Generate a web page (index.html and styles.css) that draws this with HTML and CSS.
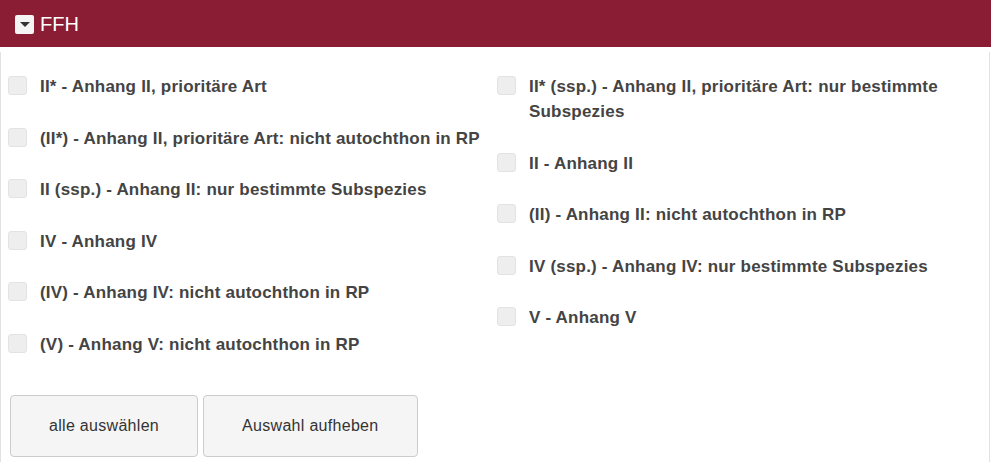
FILE: index.html
```html
<!DOCTYPE html>
<html lang="de">
<head>
<meta charset="utf-8">
<link rel="stylesheet" href="styles.css">
</head>
<body>
<div class="panel">
  <div class="panel-head">
    <span class="toggle"><span class="tri"></span></span>
    <span class="title">FFH</span>
  </div>
  <div class="panel-body">
    <div class="cols">
      <div class="col">
        <label class="item"><span class="cb"></span><span class="txt">II* - Anhang II, prioritäre Art</span></label>
        <label class="item"><span class="cb"></span><span class="txt">(II*) - Anhang II, prioritäre Art: nicht autochthon in RP</span></label>
        <label class="item"><span class="cb"></span><span class="txt">II (ssp.) - Anhang II: nur bestimmte Subspezies</span></label>
        <label class="item"><span class="cb"></span><span class="txt">IV - Anhang IV</span></label>
        <label class="item"><span class="cb"></span><span class="txt">(IV) - Anhang IV: nicht autochthon in RP</span></label>
        <label class="item"><span class="cb"></span><span class="txt">(V) - Anhang V: nicht autochthon in RP</span></label>
      </div>
      <div class="col">
        <label class="item"><span class="cb"></span><span class="txt">II* (ssp.) - Anhang II, prioritäre Art: nur bestimmte Subspezies</span></label>
        <label class="item"><span class="cb"></span><span class="txt">II - Anhang II</span></label>
        <label class="item"><span class="cb"></span><span class="txt">(II) - Anhang II: nicht autochthon in RP</span></label>
        <label class="item"><span class="cb"></span><span class="txt">IV (ssp.) - Anhang IV: nur bestimmte Subspezies</span></label>
        <label class="item"><span class="cb"></span><span class="txt">V - Anhang V</span></label>
      </div>
    </div>
    <div class="buttons">
      <button class="btn">alle auswählen</button>
      <button class="btn">Auswahl aufheben</button>
    </div>
  </div>
</div>
</body>
</html>
```
FILE: styles.css
```css
html, body {
  margin: 0;
  padding: 0;
  background: #fff;
  font-family: "Liberation Sans", Arial, sans-serif;
}
.panel {
  width: 991px;
}
.panel-head {
  height: 47px;
  background: #8a1c33;
  display: flex;
  align-items: center;
  padding-left: 15px;
  box-sizing: border-box;
}
.toggle {
  width: 19px;
  height: 19px;
  background: #f4f4f4;
  border-radius: 2px;
  display: flex;
  align-items: center;
  justify-content: center;
  margin-right: 6px;
  margin-top: 1px;
}
.tri {
  width: 0;
  height: 0;
  border-left: 5px solid transparent;
  border-right: 5px solid transparent;
  border-top: 5px solid #333;
  margin-top: 1px;
}
.title {
  color: #fff;
  font-size: 20px;
  line-height: 24px;
}
.panel-body {
  border-left: 1px solid #e2e2e2;
  border-right: 1px solid #e2e2e2;
  margin-top: 5px;
  padding: 22px 0 5px 7px;
  margin-right: 1px;
}
.cols {
  display: flex;
}
.col {
  width: 489px;
  display: flex;
  flex-direction: column;
  gap: 26.5px;
}
.item {
  display: flex;
  align-items: flex-start;
  font-weight: bold;
  font-size: 17px;
  letter-spacing: 0.2px;
  line-height: 25px;
  color: #444;
}
.cb {
  flex: none;
  width: 17px;
  height: 17px;
  border: 1px solid #e3e3e3;
  background: #eeeeee;
  border-radius: 3px;
  margin-top: 2px;
  margin-right: 13px;
}
.buttons {
  display: flex;
  gap: 5px;
  margin-top: 38px;
  padding-left: 2px;
}
.btn {
  height: 62px;
  padding: 0 38px;
  background: #f5f5f5;
  border: 1px solid #cccccc;
  border-radius: 4px;
  font-family: "Liberation Sans", Arial, sans-serif;
  font-size: 16px;
  letter-spacing: 0.3px;
  color: #333;
}
```
